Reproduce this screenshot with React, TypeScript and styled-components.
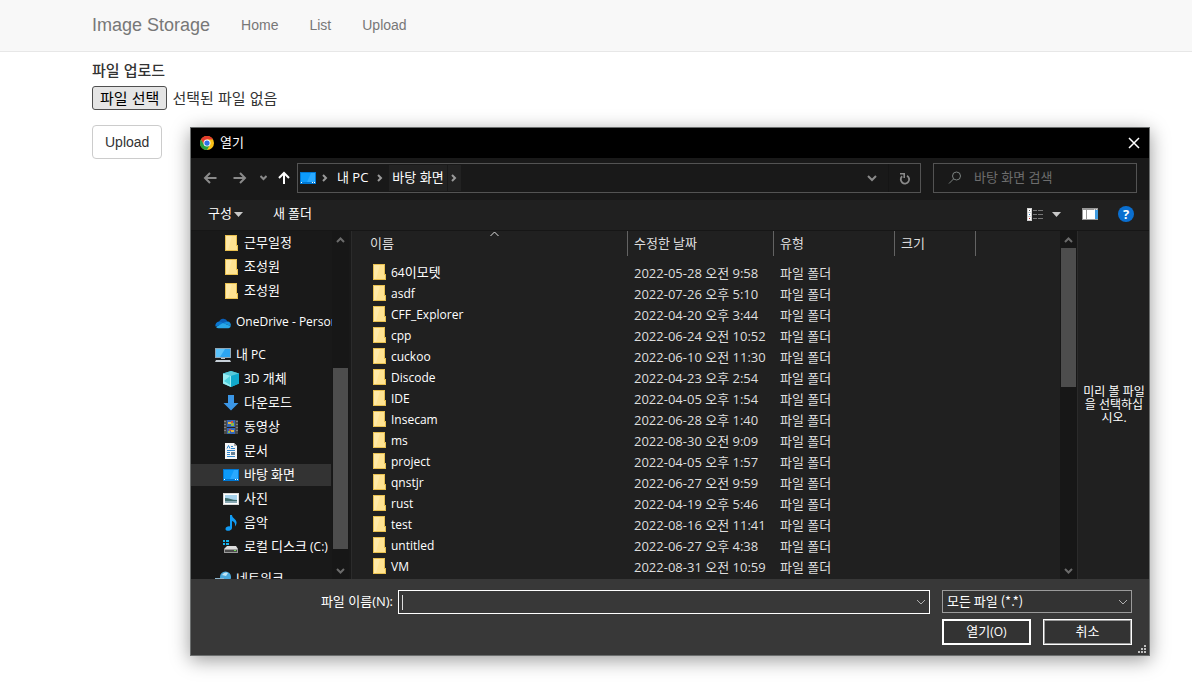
import React, { useRef } from "react";
import styled, { createGlobalStyle, css } from "styled-components";

const GlobalStyle = createGlobalStyle`
  *, *::before, *::after { box-sizing: border-box; }
  html, body { margin: 0; padding: 0; background: #fff; }
  body { font-family: "Liberation Sans", "Noto Sans CJK KR", sans-serif; font-size: 14px; color: #333; }
  button, input, select { font: inherit; color: inherit; margin: 0; }
`;

/* ---------- page ---------- */

const Page = styled.div`
  position: relative;
  min-height: 100vh;
  overflow: hidden;
`;

const Navbar = styled.nav`
  display: flex;
  align-items: center;
  gap: 31px;
  height: 52px;
  padding: 0 92px 2px;
  background: #f8f8f8;
  border-bottom: 1px solid #e7e7e7;
`;

const NavLink = styled.a<{ $brand?: boolean }>`
  color: #777;
  text-decoration: none;
  font-size: ${(p) => (p.$brand ? 18 : 14)}px;
  line-height: 20px;
`;

const UploadForm = styled.form`
  display: flex;
  flex-direction: column;
  align-items: flex-start;
  padding: 9px 92px;
`;

const FieldLabel = styled.label`
  font-size: 15px;
  font-weight: 500;
  line-height: 20px;
  margin-bottom: 5px;
`;

const FileRow = styled.div`
  display: flex;
  align-items: center;
  gap: 5px;
  margin-bottom: 15px;
  font-size: 15px;
  line-height: 20px;
`;

const FileStatus = styled.span`
  padding-top: 2px;
`;

const HiddenFile = styled.input`
  display: none;
`;

const ChooseButton = styled.button`
  height: 24px;
  padding: 2px 7px 0;
  line-height: 20px;
  color: #000;
  background: #e5e5e5;
  border: 1px solid #4f4f4f;
  border-radius: 3px;
`;

const SubmitButton = styled.button`
  height: 34px;
  padding: 0 12px;
  font-size: 14px;
  line-height: 20px;
  background: #fff;
  border: 1px solid #ccc;
  border-radius: 4px;
`;

/* ---------- dialog ---------- */

const Dialog = styled.section`
  position: absolute;
  top: 127px;
  left: 190px;
  right: 42px;
  min-width: 700px;
  border: 1px solid #6b6e6e;
  background: #202020;
  color: #fff;
  font-family: "Open Sans", "Noto Sans CJK KR", sans-serif;
  font-size: 12px;
  line-height: 20px;
  box-shadow: 0 4px 18px rgba(0, 0, 0, 0.4);
`;

const HangulRun = styled.span`
  font-family: "Noto Sans CJK KR", sans-serif;
  font-size: 13px;
`;

const LabelText = styled.span<{ $large?: boolean }>`
  display: block;
  padding-bottom: 2px;
  font-size: ${(p) => (p.$large ? 13 : 12)}px;
  white-space: nowrap;
`;

const PlainButton = styled.button`
  display: flex;
  align-items: center;
  justify-content: center;
  padding: 0;
  border: 0;
  background: none;
  color: inherit;
`;

const TitleBar = styled.header`
  display: flex;
  align-items: center;
  gap: 6px;
  height: 30px;
  padding: 0 9px 1px;
  background: #000;
`;

const Title = styled.h1`
  flex: 1;
  margin: 0;
  font-size: 12px;
  font-weight: 400;
`;

const AddressRow = styled.div`
  display: flex;
  align-items: center;
  height: 42px;
  padding: 0 12px 2px 9px;
  background: #191919;
`;

const NavButtons = styled.div`
  display: flex;
  align-items: center;
  gap: 10px;
  margin-right: 6px;
  color: #8a8a8a;
`;

const UpButton = styled(PlainButton)`
  width: 14px;
  color: #fff;
`;

const AddressBar = styled.div`
  display: flex;
  flex: 1;
  align-items: center;
  height: 30px;
  padding-left: 2px;
  margin-right: 12px;
  border: 1px solid #535353;
`;

const Crumb = styled(PlainButton)<{ $active?: boolean }>`
  height: 26px;
  padding: 0 3px;
  background: ${(p) => (p.$active ? "#222" : "none")};
`;

const CrumbArrow = styled(PlainButton)<{ $active?: boolean }>`
  width: ${(p) => (p.$active ? 13 : 18)}px;
  height: 26px;
  margin-left: ${(p) => (p.$active ? 1 : 0)}px;
  color: #9a9a9a;
  background: ${(p) => (p.$active ? "#222" : "none")};
`;

const Spacer = styled.div`
  flex: 1;
`;

const BarButton = styled(PlainButton)`
  width: 32px;
  height: 28px;
  color: #8a8a8a;
  & + & { border-left: 1px solid #151515; }
`;

const SearchBox = styled.label`
  display: flex;
  align-items: center;
  gap: 12px;
  width: 204px;
  height: 30px;
  padding: 0 14px;
  border: 1px solid #535353;
`;

const SearchInput = styled.input`
  flex: 1;
  min-width: 0;
  padding: 0 0 2px;
  border: 0;
  outline: 0;
  background: none;
  font-size: 13px;
  line-height: 20px;
  &::placeholder { color: #6d6d6d; opacity: 1; }
`;

const Toolbar = styled.div`
  display: flex;
  align-items: center;
  height: 31px;
  padding: 0 15px 2px 17px;
  border-bottom: 1px solid #161616;
`;

const ToolButton = styled(PlainButton)`
  gap: 2px;
  margin-right: 30px;
`;

const ToolIcons = styled.div`
  display: flex;
  align-items: center;
  gap: 20px;
  margin-left: auto;
`;

const ViewButton = styled(PlainButton)`
  gap: 9px;
  margin-right: 1px;
`;

const Body = styled.div`
  display: flex;
  height: 348px;
`;

const Sidebar = styled.aside`
  display: flex;
  flex: 0 0 160px;
  padding-right: 2px;
  overflow: hidden;
  background: #191919;
`;

const Tree = styled.ul`
  flex: 1;
  min-width: 0;
  margin: 0;
  padding: 0;
  overflow: hidden;
  list-style: none;
`;

const TreeItem = styled.li<{ $level: number; $selected?: boolean; $gap?: boolean }>`
  display: flex;
  align-items: center;
  gap: 5px;
  height: 24px;
  margin-top: ${(p) => (p.$gap ? 8 : 0)}px;
  padding-left: ${(p) => (p.$level ? 32 : 24)}px;
  overflow: hidden;
  ${(p) => p.$selected && css`
    margin-right: 1px;
    background: #333;
    border: solid #191919;
    border-width: 1px 0;
  `}
  svg { flex: none; }
`;

const ScrollBar = styled.div`
  display: flex;
  flex-direction: column;
  flex: 0 0 17px;
  padding: 0 1px;
  background: #171717;
`;

const ScrollButton = styled(PlainButton)`
  height: 17px;
  color: #6b6b6b;
`;

const ScrollPart = styled.div<{ $share: number; $thumb?: boolean }>`
  flex: ${(p) => p.$share} 1 0;
  background: ${(p) => (p.$thumb ? "#4d4d4d" : "none")};
`;

const FilePane = styled.div`
  flex: 1;
  min-width: 0;
  overflow: hidden;
  border-left: 1px solid #2b2b2b;
`;

const FileTable = styled.table`
  width: 100%;
  table-layout: fixed;
  border-collapse: separate;
  border-spacing: 0;
  ${LabelText} { padding-bottom: 0; }
`;

const Column = styled.col<{ $width?: number }>`
  width: ${(p) => (p.$width ? `${p.$width}px` : "auto")};
`;

const HeadCell = styled.th<{ $first?: boolean; $last?: boolean }>`
  position: relative;
  height: 25px;
  padding: 0 0 0 ${(p) => (p.$first ? 18 : 6)}px;
  font-weight: 400;
  text-align: left;
  color: #dedede;
  border-right: ${(p) => (p.$last ? 0 : "1px solid #636363")};
`;

const SortMark = styled.span`
  position: absolute;
  top: 0;
  left: 50%;
  display: flex;
`;

const RowGap = styled.td`
  height: 6px;
  padding: 0;
`;

const Cell = styled.td`
  height: 21px;
  padding: 0 0 0 6px;
  color: #dedede;
`;

const NameCell = styled(Cell)`
  padding-left: 21px;
  color: #fff;
`;

const FileName = styled.div`
  display: flex;
  align-items: center;
  gap: 5px;
  height: 21px;
  svg { margin-bottom: 1px; }
`;

const Preview = styled.aside`
  display: flex;
  align-items: center;
  justify-content: center;
  flex: 0 0 72px;
  padding: 0 1px 2px 2px;
  border-left: 1px solid #2b2b2b;
  font-size: 12px;
  line-height: 13px;
  text-align: center;
  word-break: break-all;
`;

const Footer = styled.footer`
  position: relative;
  display: flex;
  flex-direction: column;
  gap: 5px;
  padding: 11px 17px 10px 20px;
  background: #383838;
`;

const FooterRow = styled.div`
  display: flex;
  align-items: flex-start;
  justify-content: flex-end;
  gap: 12px;
`;

const NameLabel = styled.label`
  width: 182px;
  margin-right: -7px;
  padding-top: 1px;
  text-align: right;
`;

const ComboBox = styled.div`
  display: flex;
  flex: 1;
  align-items: center;
  height: 24px;
  padding: 0 3px;
  border: 1px solid #fff;
  svg { color: #b0b0b0; }
`;

const Caret = styled.span`
  width: 1px;
  height: 15px;
  background: #ddd;
`;

const NameInput = styled.input`
  flex: 1;
  min-width: 0;
  padding: 0;
  border: 0;
  outline: 0;
  background: none;
`;

const TypeBox = styled.div`
  position: relative;
  width: 190px;
  color: #fff;
  svg { position: absolute; right: 4px; top: 9px; color: #b0b0b0; pointer-events: none; }
`;

const TypeSelect = styled.select`
  display: block;
  appearance: none;
  width: 100%;
  height: 23px;
  padding: 0 4px 2px;
  border: 1px solid #9b9b9b;
  border-radius: 0;
  background: #333;
  font-family: "Noto Sans CJK KR", sans-serif;
  font-size: 13px;
  line-height: 20px;
`;

const ActionButton = styled.button<{ $primary?: boolean }>`
  width: 89px;
  height: 26px;
  padding: 0;
  border: ${(p) => (p.$primary ? "2px solid #fff" : "1px solid #fff")};
  box-shadow: ${(p) => (p.$primary ? "none" : "inset 0 0 0 1px #9b9b9b")};
  background: #333;
  line-height: 20px;
`;

const Grip = styled.div`
  position: absolute;
  right: 3px;
  bottom: 2px;
  display: flex;
`;

/* ---------- icons ---------- */

const Stroke = ({ w, h, d, width = 2 }: { w: number; h: number; d: string; width?: number }) => (
  <svg width={w} height={h} viewBox={`0 0 ${w} ${h}`} fill="none" stroke="currentColor" strokeWidth={width} aria-hidden="true">
    <path d={d} />
  </svg>
);

const DropTriangle = () => (
  <svg width="9" height="5" viewBox="0 0 9 5" aria-hidden="true"><path d="M0 0h9L4.500 5z" fill="#c8c8c8" /></svg>
);

const ChromeIcon = () => (
  <svg width="14" height="14" viewBox="0 0 48 48" aria-hidden="true">
    <circle cx="24" cy="24" r="24" fill="#fbc116" />
    <path d="M24 24 3.200 12A24 24 0 0 1 44.800 12L24 12z" fill="#e33b2e" />
    <path d="M3.200 12 13.600 30 24 24 24 12z" fill="#e33b2e" />
    <path d="M3.200 12A24 24 0 0 0 24 48L34 30H13.600z" fill="#269f42" />
    <circle cx="24" cy="24" r="12" fill="#fff" />
    <circle cx="24" cy="24" r="9" fill="#2f72e8" />
  </svg>
);

const DesktopIcon = () => (
  <svg width="16" height="16" viewBox="0 0 16 16" aria-hidden="true">
    <path d="M0 2h16v12H0z" fill="#0078d4" />
    <path d="M1 3h14v9H1z" fill="#0d9bfb" />
    <path d="M11 3h4v9H7z" fill="#2aa9ff" />
    <path d="M1 12h1v1H1zM12 12h1v1h-1zM14 12h1v1h-1z" fill="#fff" />
  </svg>
);

const FolderShape = () => (
  <>
    <path d="M0 0h12v10h1v6H0z" fill="#e8c050" />
    <path d="M1 1h10v14H1z" fill="#ffe391" />
    <path d="M1 1h6L3 15H1z" fill="#ffe9a6" />
    <path d="M11 11h1v4h-1z" fill="#ffe391" />
  </>
);

const FolderIcon = () => (
  <svg width="13" height="16" viewBox="0 0 13 16" aria-hidden="true"><FolderShape /></svg>
);

const TreeFolderIcon = () => (
  <svg width="16" height="16" viewBox="-2 0 16 16" aria-hidden="true"><FolderShape /></svg>
);

const OneDriveIcon = () => (
  <svg width="16" height="16" viewBox="0 0 16 16" aria-hidden="true">
    <path d="M4 7a4.500 4.500 0 0 1 8.500-.5L10 9z" fill="#0a5fb8" />
    <path d="M4 6.500A4 4 0 0 0 .5 11.500L9 9 6.500 7z" fill="#0b76d1" />
    <path d="M8 8l4.500-1.500A3.300 3.300 0 0 1 15.600 11z" fill="#1590df" />
    <path d="M1 12a3 3 0 0 0 2.500 1.200h10A2.400 2.400 0 0 0 15.700 11L8 8z" fill="#28a8ea" />
  </svg>
);

const PcIcon = () => (
  <svg width="16" height="16" viewBox="0 0 16 16" aria-hidden="true">
    <path d="M0 1h16v10H0z" fill="#8fa7b8" />
    <path d="M1 2h14v8H1z" fill="#2ca5f2" />
    <path d="M1 2h9L5 10H1z" fill="#5bc3fb" />
    <path d="M6 11h4v1H6z" fill="#b9c6d0" />
    <path d="M1 13h14l1 2H0z" fill="#c7d0d8" />
  </svg>
);

const CubeIcon = () => (
  <svg width="16" height="16" viewBox="0 0 16 16" aria-hidden="true">
    <path d="M8 0l8 2.500v10L8 16 0 12.500v-10z" fill="#2cc0d6" />
    <path d="M8 0l8 2.500L8 5 0 2.500z" fill="#58c8d8" />
    <path d="M0 2.500L8 5v11l-8-3.500z" fill="#98ecf2" />
    <path d="M1 10l6-5v9z" fill="#4ed3df" />
    <path d="M8 5l8-2.500v10L8 16z" fill="#10a9cc" />
  </svg>
);

const DownloadIcon = () => (
  <svg width="16" height="16" viewBox="0 0 16 16" aria-hidden="true">
    <path d="M5 0h6v8h4.500L8 15.500.5 8H5z" fill="#3b96e6" />
  </svg>
);

const VideoIcon = () => (
  <svg width="16" height="16" viewBox="0 0 16 16" aria-hidden="true">
    <path d="M1 1h14v14H1z" fill="#4a4a4a" />
    <path d="M2 2v12M14 2v12" stroke="#b5b5b5" strokeWidth="1" strokeDasharray="1 2" />
    <path d="M4 1h8v14H4z" fill="#3466b8" />
    <path d="M4 8h8v1H4z" fill="#222" />
    <path d="M5 3h3v2H5zM8 11h3v2H8z" fill="#e6b83c" />
    <path d="M8 4h3v3H8zM5 12h2v2H5z" fill="#8ab84a" />
    <path d="M8 2h2v2H8zM6 10h2v2H6z" fill="#d85038" />
  </svg>
);

const DocIcon = () => (
  <svg width="16" height="16" viewBox="0 0 16 16" aria-hidden="true">
    <path d="M2 0h9l3 3v13H2z" fill="#f5f5f5" />
    <path d="M11 0v3h3z" fill="#aaa" />
    <path d="M4 5.500l1.500-3L7 5.500M8 3.500h2M8 5.500h4M4 7.500h8M4 9.500h3M4 11.500h3M4 13.500h8" stroke="#2f87cf" fill="none" />
    <path d="M8 9h4v3H8z" fill="#668094" />
  </svg>
);

const PictureIcon = () => (
  <svg width="16" height="16" viewBox="0 0 16 16" aria-hidden="true">
    <path d="M0 2h16v12H0z" fill="#d8d8d8" />
    <path d="M1 3h14v10H1z" fill="#fff" />
    <path d="M2 4h12v8H2z" fill="#a8d4ee" />
    <path d="M2 7c4 0 7 2 12 2v3H2z" fill="#3d6b6c" />
    <path d="M2 10h12v2H2z" fill="#89a9b5" />
  </svg>
);

const MusicIcon = () => (
  <svg width="16" height="16" viewBox="0 0 16 16" aria-hidden="true">
    <path d="M7 0h2c0 3 4 4 4.500 7 .2 2-.5 3-1.500 4.500C12.500 8 11 6.500 9 6v7c0 3-6 4-6.500 1.300C2.300 12 5 11 7 11.500z" fill="#119cf5" />
  </svg>
);

const DiskIcon = () => (
  <svg width="16" height="16" viewBox="0 0 16 16" aria-hidden="true">
    <path d="M0 1h2v2H0zM3 1h3v2H3zM0 4h2v2H0zM3 4h3v2H3z" fill="#16b4ee" />
    <path d="M4 7h9l2 3H1z" fill="#dcdcdc" />
    <path d="M1 10h14v4H1z" fill="#9b9b9b" />
    <path d="M2 11h12v2H2z" fill="#4c4c4c" />
    <path d="M11 11h2v1h-2z" fill="#6fe05a" />
  </svg>
);

const NetworkIcon = () => (
  <svg width="16" height="16" viewBox="0 0 16 16" aria-hidden="true">
    <circle cx="10.500" cy="6" r="5.500" fill="#4aa9dc" />
    <path d="M7 4c2-3 5-3 6-2l-2 3z" fill="#c4e6f5" />
    <path d="M0 7h9v6H0z" fill="#8fb7cf" />
  </svg>
);

const SearchIcon = () => (
  <svg width="14" height="14" viewBox="0 0 14 14" fill="none" stroke="#7b8280" aria-hidden="true">
    <circle cx="8.500" cy="5" r="4" />
    <path d="M5.500 8L1 12.500" />
  </svg>
);

const RefreshIcon = () => (
  <svg width="12" height="13" viewBox="0 0 12 13" fill="none" stroke="currentColor" strokeWidth="1.800" aria-hidden="true">
    <path d="M8 3.700A4.200 4.200 0 1 1 3.200 4.200" />
    <path d="M1 1.700h4.200V6" strokeWidth="1.600" />
  </svg>
);

const ListViewIcon = () => (
  <svg width="16" height="13" viewBox="0 0 16 13" aria-hidden="true">
    <path d="M0 0h5v13H0z" fill="#d0d0d0" />
    <path d="M1 1h3v3H1zM1 5h3v3H1zM1 9h3v3H1z" fill="#fff" />
    <path d="M2 2h1v1H2z" fill="#555" />
    <path d="M2 6h1v1H2z" fill="#3179c8" />
    <path d="M2 10h1v1H2z" fill="#c03030" />
    <path d="M6 2.500h4M11 2.500h5M6 6.500h4M11 6.500h5M6 10.500h4M11 10.500h5" stroke="#777" />
  </svg>
);

const PreviewIcon = () => (
  <svg width="16" height="12" viewBox="0 0 16 12" aria-hidden="true">
    <path d="M0 0h16v12H0z" fill="#999" />
    <path d="M1 2h3v9H1zM5 2h8v9H5z" fill="#fff" />
    <path d="M13 2h3v9h-3z" fill="#3f9be0" />
    <path d="M12 1h1v1h-1zM14 1h1v1h-1z" fill="#ddd" />
  </svg>
);

const HelpBadge = styled(PlainButton)`
  width: 16px;
  height: 16px;
  border-radius: 50%;
  background: #0a6fd0;
  font-size: 13px;
  font-weight: 700;
  line-height: 16px;
`;

const GripIcon = () => (
  <svg width="8" height="8" viewBox="0 0 8 8" aria-hidden="true">
    <path d="M6 0h2v2H6zM3 3h2v2H3zM6 3h2v2H6zM0 6h2v2H0zM3 6h2v2H3zM6 6h2v2H6z" fill="#bfbfbf" />
  </svg>
);

/* ---------- content ---------- */

const Label = ({ text, large }: { text: string; large?: boolean }) => (
  <LabelText $large={large}>
    {text.split(/([가-힣]+)/).map((run, i) => (i % 2 ? <HangulRun key={i}>{run}</HangulRun> : run))}
  </LabelText>
);

const tree = [
  { icon: TreeFolderIcon, text: "근무일정", level: 1 },
  { icon: TreeFolderIcon, text: "조성원", level: 1 },
  { icon: TreeFolderIcon, text: "조성원", level: 1 },
  { icon: OneDriveIcon, text: "OneDrive - Personal", level: 0, gap: true },
  { icon: PcIcon, text: "내 PC", level: 0, gap: true },
  { icon: CubeIcon, text: "3D 개체", level: 1 },
  { icon: DownloadIcon, text: "다운로드", level: 1 },
  { icon: VideoIcon, text: "동영상", level: 1 },
  { icon: DocIcon, text: "문서", level: 1 },
  { icon: DesktopIcon, text: "바탕 화면", level: 1, selected: true },
  { icon: PictureIcon, text: "사진", level: 1 },
  { icon: MusicIcon, text: "음악", level: 1 },
  { icon: DiskIcon, text: "로컬 디스크 (C:)", level: 1 },
  { icon: NetworkIcon, text: "네트워크", level: 0, gap: true },
];

const files = [
  ["64이모텟", "2022-05-28 오전 9:58"],
  ["asdf", "2022-07-26 오후 5:10"],
  ["CFF_Explorer", "2022-04-20 오후 3:44"],
  ["cpp", "2022-06-24 오전 10:52"],
  ["cuckoo", "2022-06-10 오전 11:30"],
  ["Discode", "2022-04-23 오후 2:54"],
  ["IDE", "2022-04-05 오후 1:54"],
  ["Insecam", "2022-06-28 오후 1:40"],
  ["ms", "2022-08-30 오전 9:09"],
  ["project", "2022-04-05 오후 1:57"],
  ["qnstjr", "2022-06-27 오전 9:59"],
  ["rust", "2022-04-19 오후 5:46"],
  ["test", "2022-08-16 오전 11:41"],
  ["untitled", "2022-06-27 오후 4:38"],
  ["VM", "2022-08-31 오전 10:59"],
];

const Scroll = ({ parts }: { parts: [number, number, number] }) => (
  <ScrollBar>
    <ScrollButton type="button" aria-label="위로"><Stroke w={9} h={6} d="M1 5l3.500-3.500L8 5" /></ScrollButton>
    <ScrollPart $share={parts[0]} />
    <ScrollPart $share={parts[1]} $thumb />
    <ScrollPart $share={parts[2]} />
    <ScrollButton type="button" aria-label="아래로"><Stroke w={9} h={6} d="M1 1l3.500 3.500L8 1" /></ScrollButton>
  </ScrollBar>
);

const OpenDialog = () => (
  <Dialog role="dialog" aria-label="열기">
    <TitleBar>
      <ChromeIcon />
      <Title><Label text="열기" large /></Title>
      <PlainButton type="button" aria-label="닫기">
        <Stroke w={12} h={12} d="M1 1l10 10M11 1L1 11" width={1.5} />
      </PlainButton>
    </TitleBar>

    <AddressRow>
      <NavButtons>
        <PlainButton type="button" aria-label="뒤로"><Stroke w={20} h={14} d="M16.500 7H5M10 2L5 7l5 5" /></PlainButton>
        <PlainButton type="button" aria-label="앞으로"><Stroke w={20} h={14} d="M3.500 7H15M10 2l5 5-5 5" /></PlainButton>
        <PlainButton type="button" aria-label="최근 위치"><Stroke w={7} h={6} d="M.5 1l3 3 3-3" /></PlainButton>
        <UpButton type="button" aria-label="상위 폴더"><Stroke w={12} h={14} d="M6 13V2M1 7l5-5 5 5" /></UpButton>
      </NavButtons>
      <AddressBar>
        <DesktopIcon />
        <CrumbArrow type="button" aria-label="펼치기"><Stroke w={6} h={8} d="M1 1l3 3-3 3" /></CrumbArrow>
        <Crumb type="button"><Label text="내 PC" large /></Crumb>
        <CrumbArrow type="button" aria-label="펼치기"><Stroke w={6} h={8} d="M1 1l3 3-3 3" /></CrumbArrow>
        <Crumb type="button" $active><Label text="바탕 화면" large /></Crumb>
        <CrumbArrow type="button" aria-label="펼치기" $active><Stroke w={6} h={8} d="M1 1l3 3-3 3" /></CrumbArrow>
        <Spacer />
        <BarButton type="button" aria-label="이전 위치"><Stroke w={10} h={7} d="M1 1l4 4 4-4" /></BarButton>
        <BarButton type="button" aria-label="새로 고침"><RefreshIcon /></BarButton>
      </AddressBar>
      <SearchBox>
        <SearchIcon />
        <SearchInput type="text" placeholder="바탕 화면 검색" aria-label="바탕 화면 검색" />
      </SearchBox>
    </AddressRow>

    <Toolbar>
      <ToolButton type="button"><Label text="구성" /><DropTriangle /></ToolButton>
      <ToolButton type="button"><Label text="새 폴더" /></ToolButton>
      <ToolIcons>
        <ViewButton type="button" aria-label="보기"><ListViewIcon /><DropTriangle /></ViewButton>
        <PlainButton type="button" aria-label="미리 보기 창"><PreviewIcon /></PlainButton>
        <HelpBadge type="button">?</HelpBadge>
      </ToolIcons>
    </Toolbar>

    <Body>
      <Sidebar>
        <Tree>
          {tree.map(({ icon: Icon, text, level, gap, selected }, i) => (
            <TreeItem key={i} $level={level} $gap={gap} $selected={selected}>
              <Icon />
              <Label text={text} />
            </TreeItem>
          ))}
        </Tree>
        <Scroll parts={[120, 181, 13]} />
      </Sidebar>

      <FilePane>
        <FileTable>
          <colgroup>
            <Column $width={276} />
            <Column $width={146} />
            <Column $width={121} />
            <Column $width={81} />
            <Column />
          </colgroup>
          <thead>
            <tr>
              <HeadCell $first>
                <Label text="이름" />
                <SortMark><Stroke w={9} h={6} d="M.5 5l4-4 4 4" width={1} /></SortMark>
              </HeadCell>
              <HeadCell><Label text="수정한 날짜" /></HeadCell>
              <HeadCell><Label text="유형" /></HeadCell>
              <HeadCell><Label text="크기" /></HeadCell>
              <HeadCell $last />
            </tr>
          </thead>
          <tbody>
            <tr><RowGap colSpan={5} /></tr>
            {files.map(([name, date]) => (
              <tr key={name}>
                <NameCell><FileName><FolderIcon /><Label text={name} /></FileName></NameCell>
                <Cell><Label text={date} large /></Cell>
                <Cell><Label text="파일 폴더" large /></Cell>
                <Cell />
                <Cell />
              </tr>
            ))}
          </tbody>
        </FileTable>
      </FilePane>
      <Scroll parts={[0, 139, 175]} />
      <Preview>미리 볼 파일을 선택하십시오.</Preview>
    </Body>

    <Footer>
      <FooterRow>
        <NameLabel htmlFor="file-name"><Label text="파일 이름(N):" large /></NameLabel>
        <ComboBox>
          <Caret />
          <NameInput id="file-name" type="text" />
          <PlainButton type="button" aria-label="목록"><Stroke w={10} h={6} d="M1 1l4 4 4-4" width={1} /></PlainButton>
        </ComboBox>
        <TypeBox>
          <TypeSelect aria-label="파일 형식"><option>모든 파일 (*.*)</option></TypeSelect>
          <Stroke w={10} h={6} d="M1 1l4 4 4-4" width={1} />
        </TypeBox>
      </FooterRow>
      <FooterRow>
        <ActionButton type="button" $primary><Label text="열기(O)" /></ActionButton>
        <ActionButton type="button"><Label text="취소" /></ActionButton>
      </FooterRow>
      <Grip><GripIcon /></Grip>
    </Footer>
  </Dialog>
);

export default function App() {
  const fileRef = useRef<HTMLInputElement>(null);
  return (
    <Page>
      <GlobalStyle />
      <Navbar>
        <NavLink href="#" $brand>Image Storage</NavLink>
        <NavLink href="#home">Home</NavLink>
        <NavLink href="#list">List</NavLink>
        <NavLink href="#upload">Upload</NavLink>
      </Navbar>
      <UploadForm onSubmit={(e) => e.preventDefault()}>
        <FieldLabel htmlFor="upload-file">파일 업로드</FieldLabel>
        <FileRow>
          <HiddenFile id="upload-file" type="file" ref={fileRef} />
          <ChooseButton type="button" onClick={() => fileRef.current?.click()}>파일 선택</ChooseButton>
          <FileStatus>선택된 파일 없음</FileStatus>
        </FileRow>
        <SubmitButton type="submit">Upload</SubmitButton>
      </UploadForm>
      <OpenDialog />
    </Page>
  );
}
